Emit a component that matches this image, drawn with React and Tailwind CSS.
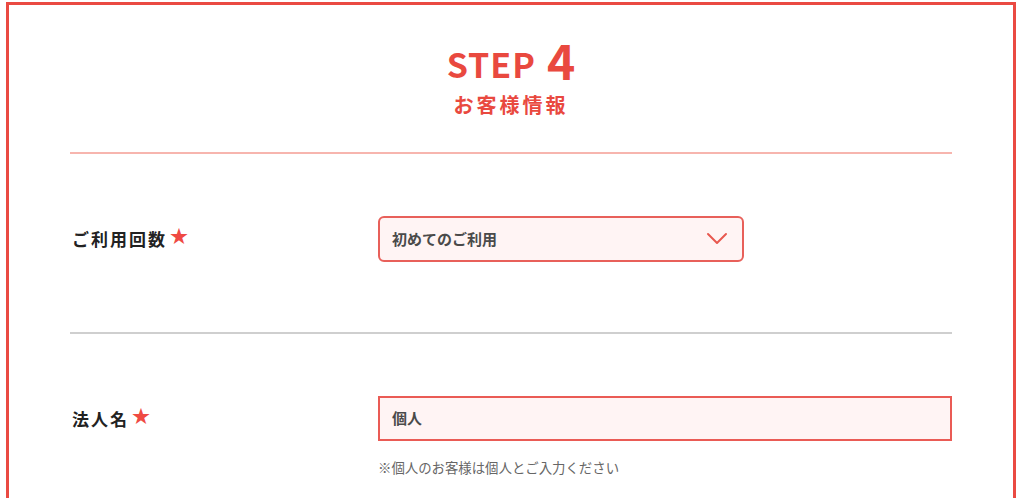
import React from 'react';

const jp = { fontFamily: '"Noto Sans CJK JP", "Noto Sans", sans-serif' };

const Star = () => (
  <span className="ml-[3px] text-[18px] leading-none text-[#ef4a43] relative top-[-4px]">★</span>
);

const Chevron = () => (
  <svg width="22" height="14" viewBox="0 0 22 14" fill="none">
    <path d="M2 2 L11 11 L20 2" stroke="#e8584f" strokeWidth="2" strokeLinecap="round" strokeLinejoin="round" />
  </svg>
);

function App() {
  return (
    <div className="bg-white min-h-screen pt-[2px] pl-[6px]" style={jp}>
      <div className="w-[1010px] h-[520px] border-[3px] border-b-0 border-[#ea4a42] px-[61px]">
        {/* header */}
        <div className="flex flex-col items-center pt-[30px]">
          <div className="flex items-end text-[#e9493f] font-bold leading-none">
            <span className="text-[34px] tracking-[1px] mr-[11px]">STEP</span>
            <span className="text-[48px] mb-[-2px]">4</span>
          </div>
          <div className="mt-[14px] text-[20px] font-bold tracking-[3px] text-[#e9493f] leading-none">お客様情報</div>
        </div>
        <div className="mt-[37px] h-[2px] bg-[#f7b5ae]" />

        {/* row 1 */}
        <div className="flex items-center pt-[62px] pb-[70px]">
          <div className="w-[308px] flex items-center pl-[2px] text-[17px] font-bold tracking-[2px] text-[#222]">
            ご利用回数<Star />
          </div>
          <div className="w-[366px] h-[46px] rounded-[6px] border-2 border-[#e8605a] bg-[#fff4f4] flex items-center justify-between pl-[12px] pr-[14px]">
            <span className="text-[15px] font-bold text-[#4a4a4a]">初めてのご利用</span>
            <Chevron />
          </div>
        </div>
        <div className="h-[2px] bg-[#cfcfcf]" />

        {/* row 2 */}
        <div className="flex pt-[62px]">
          <div className="w-[308px] h-[45px] flex items-center pl-[2px] text-[17px] font-bold tracking-[2px] text-[#222]">
            法人名<Star />
          </div>
          <div className="flex-1">
            <div className="h-[45px] border-2 border-[#ea5b55] bg-[#fff4f4] flex items-center pl-[12px]">
              <span className="text-[15px] font-bold text-[#4a4a4a]">個人</span>
            </div>
            <div className="mt-[16px] text-[13.4px] text-[#666]">※個人のお客様は個人とご入力ください</div>
          </div>
        </div>
      </div>
    </div>
  );
}

export default App;
